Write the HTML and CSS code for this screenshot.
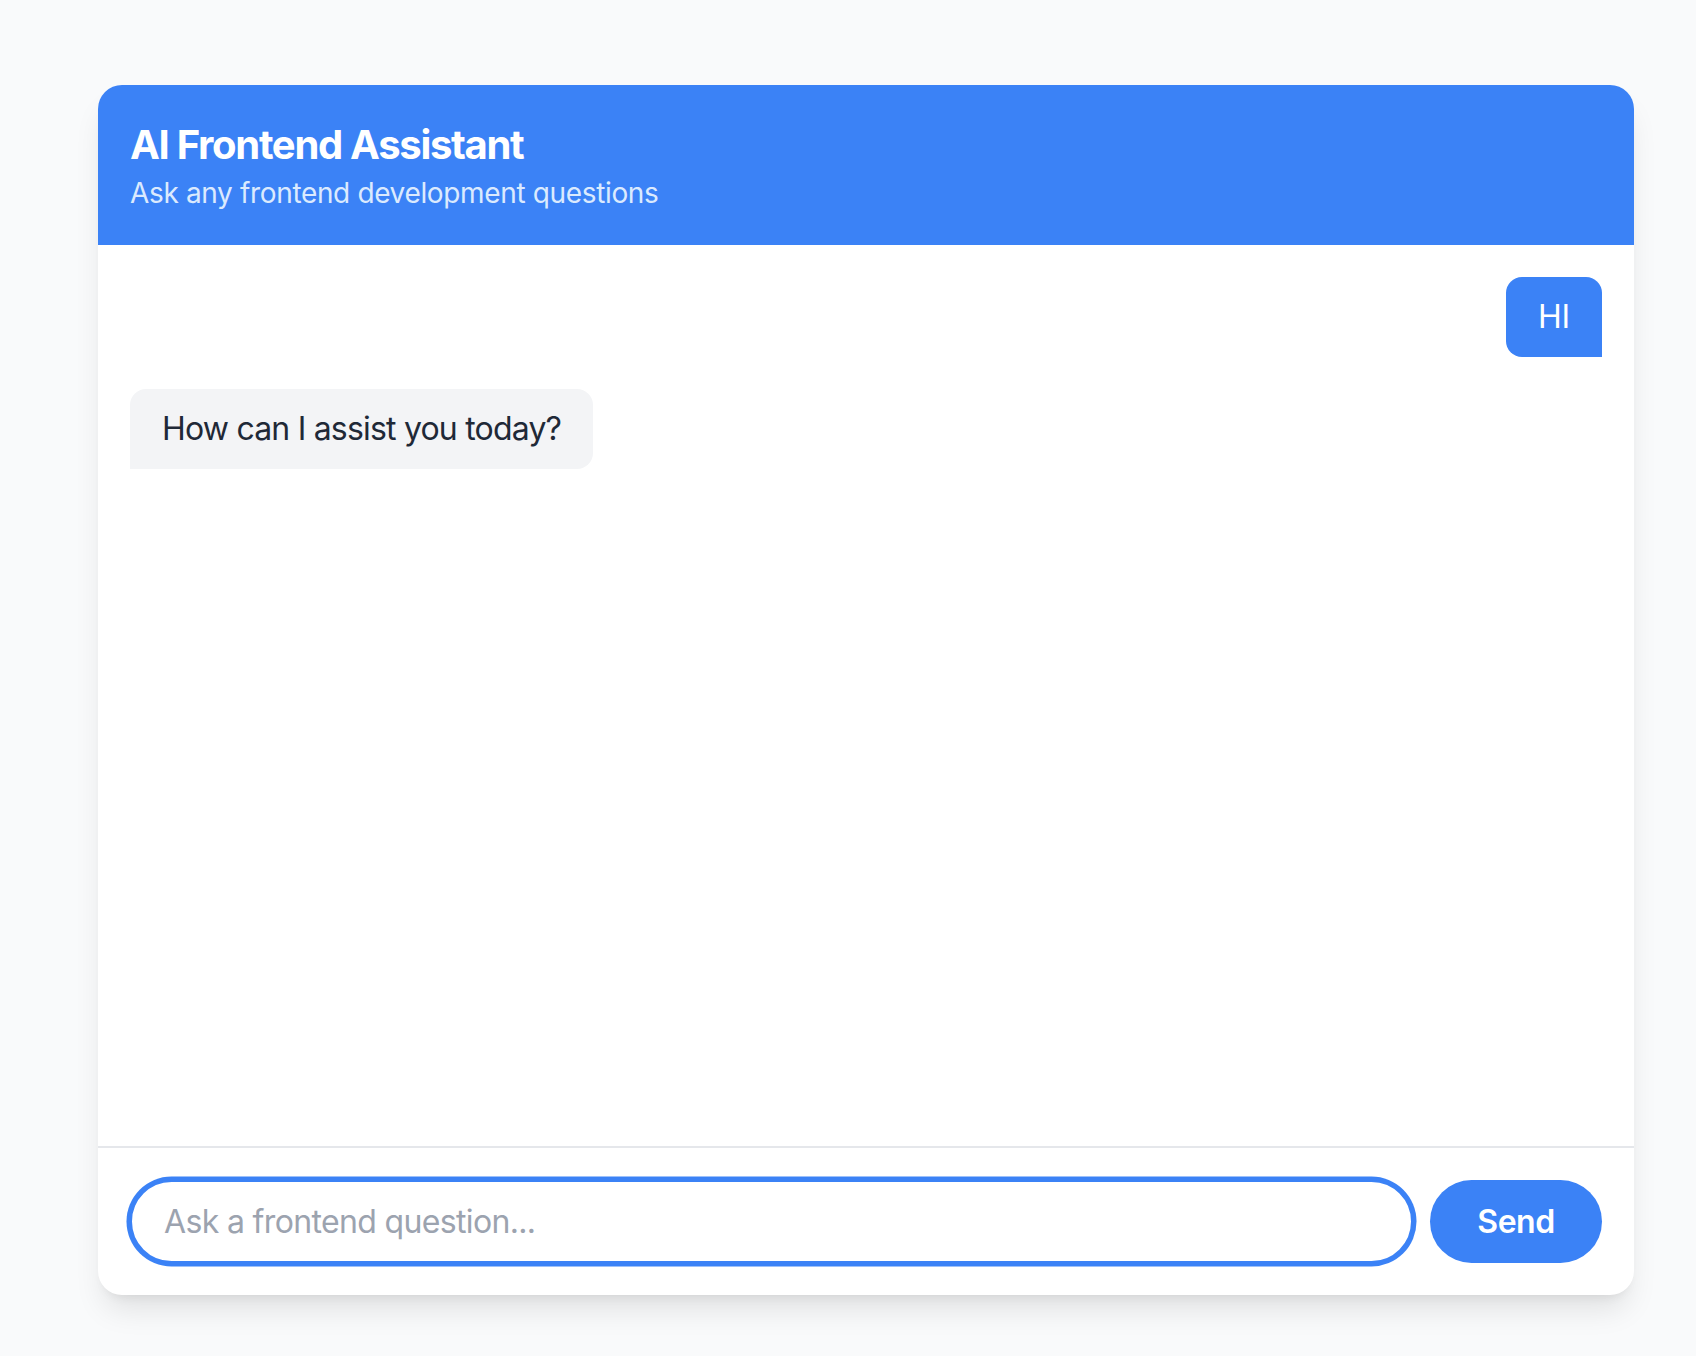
FILE: index.html
```
<!DOCTYPE html>
<html lang="en">
<head>
<meta charset="utf-8">
<title>AI Frontend Assistant</title>
<link rel="stylesheet" href="styles.css">
</head>
<body>
<div class="page">
  <div class="card">
    <header class="header">
      <h1 class="title">AI Frontend Assistant</h1>
      <p class="subtitle">Ask any frontend development questions</p>
    </header>
    <main class="messages">
      <div class="row row-user"><div class="bubble bubble-user">HI</div></div>
      <div class="row row-ai"><div class="bubble bubble-ai">How can I assist you today?</div></div>
    </main>
    <footer class="composer">
      <input class="input" type="text" placeholder="Ask a frontend question...">
      <button class="send">Send</button>
    </footer>
  </div>
</div>
</body>
</html>
```

FILE: styles.css
```
* { box-sizing: border-box; }
html, body { margin: 0; padding: 0; }
body {
  background: #f9fafb;
  font-family: Inter, "Noto Sans", "Liberation Sans", sans-serif;
  width: 1696px;
  height: 1356px;
  overflow: hidden;
}
.page {
  padding: 85px 0 0 98px;
}
.card {
  width: 1536px;
  height: 1210px;
  background: #ffffff;
  border-radius: 24px;
  overflow: hidden;
  display: flex;
  flex-direction: column;
  box-shadow: 0 20px 30px -6px rgba(0,0,0,0.10), 0 8px 12px -8px rgba(0,0,0,0.10);
}
.header {
  background: #3b82f6;
  padding: 32px;
  height: 160px;
  flex: none;
}
.title {
  margin: 0;
  color: #ffffff;
  font-size: 40px;
  line-height: 56px;
  font-weight: 700;
  letter-spacing: -1.3px;
}
.subtitle {
  margin: 0;
  color: #dbeafe;
  font-size: 28px;
  line-height: 40px;
  font-weight: 400;
  letter-spacing: -0.35px;
}
.messages {
  flex: 1;
  padding: 32px;
  display: flex;
  flex-direction: column;
  gap: 32px;
}
.row { display: flex; }
.row-user { justify-content: flex-end; }
.row-ai { justify-content: flex-start; }
.bubble {
  font-size: 32px;
  line-height: 48px;
  padding: 16px 32px;
  border-radius: 16px;
  letter-spacing: -0.8px;
}
.bubble-user {
  background: #3b82f6;
  color: #ffffff;
  border-bottom-right-radius: 0;
  letter-spacing: -0.2px;
}
.bubble-ai {
  background: #f3f4f6;
  color: #1f2937;
  border-bottom-left-radius: 0;
}
.composer {
  flex: none;
  border-top: 2px solid #e5e7eb;
  padding: 32px;
  display: flex;
  gap: 17px;
  align-items: center;
}
.input {
  flex: 1;
  height: 83px;
  border: 2px solid #3b82f6;
  border-radius: 9999px;
  padding: 0 32px;
  font-family: inherit;
  font-size: 32px;
  letter-spacing: -0.65px;
  color: #1f2937;
  outline: none;
  background: #fff;
  box-shadow: 0 0 0 3.5px #3b82f6;
}
.input::placeholder { color: #9ca3af; }
.send {
  flex: none;
  width: 172px;
  height: 83px;
  border: none;
  border-radius: 9999px;
  background: #3b82f6;
  color: #ffffff;
  font-family: inherit;
  font-size: 32px;
  font-weight: 600;
  letter-spacing: -0.5px;
}
```
